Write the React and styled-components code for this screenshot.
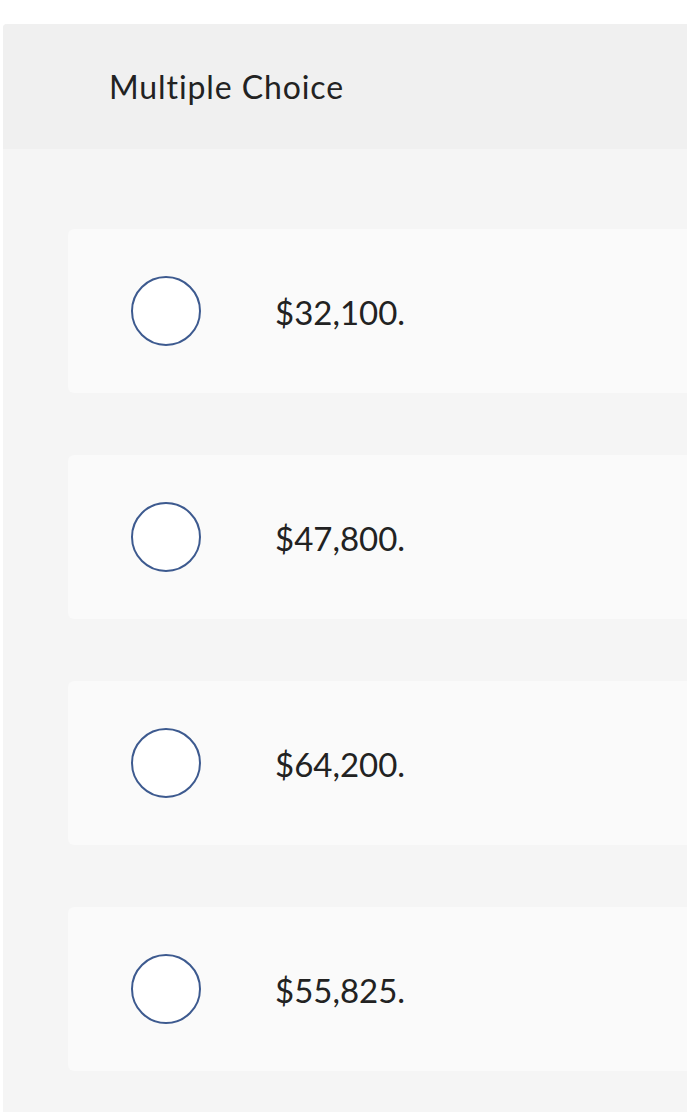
import React from "react";
import styled, { createGlobalStyle } from "styled-components";

const Global = createGlobalStyle`
  html, body { margin: 0; padding: 0; background: #ffffff; overflow: hidden; }
  body { font-family: Lato, "Open Sans", Arial, sans-serif; color: #222222; }
`;

const Page = styled.div`
  padding: 24px 0 0 3px;
`;

const Panel = styled.section`
  background: #f5f5f5;
  border-radius: 4px 0 0 0;
  overflow: hidden;
`;

const Header = styled.header`
  height: 125px;
  background: #f0f0f0;
  display: flex;
  align-items: center;
  padding-left: 106px;
  box-sizing: border-box;
`;

const Title = styled.h2`
  margin: 0;
  font-weight: 400;
  font-size: 32px;
  color: #222222;
  letter-spacing: 0.9px;
`;

const List = styled.div`
  display: flex;
  flex-direction: column;
  gap: 62px;
  padding: 80px 0 60px 65px;
`;

const Option = styled.label`
  height: 164px;
  background: #fafafa;
  border-radius: 6px 0 0 6px;
  display: flex;
  align-items: center;
  padding-left: 63px;
  box-sizing: border-box;
  cursor: pointer;
`;

const Radio = styled.span`
  width: 66px;
  height: 66px;
  border-radius: 50%;
  border: 2px solid #3d5a8f;
  background: #ffffff;
  flex: none;
`;

const Text = styled.span`
  margin-left: 74px;
  font-size: 33px;
  color: #222222;
  position: relative;
  top: 1px;
`;

const options = ["$32,100.", "$47,800.", "$64,200.", "$55,825."];

export default function App() {
  return (
    <>
      <Global />
      <Page>
        <Panel>
          <Header>
            <Title>Multiple Choice</Title>
          </Header>
          <List>
            {options.map((o) => (
              <Option key={o}>
                <Radio />
                <Text>{o}</Text>
              </Option>
            ))}
          </List>
        </Panel>
      </Page>
    </>
  );
}
